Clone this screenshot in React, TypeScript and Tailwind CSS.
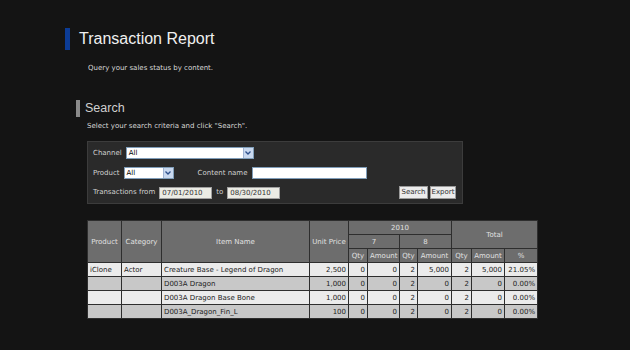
import React from "react";

const F = { fontFamily: '"DejaVu Sans", Verdana, sans-serif' };
const H = { fontFamily: '"Liberation Sans", Arial, sans-serif' };

function Arrow() {
  return (
    <span className="flex h-full w-[10px] items-center justify-center bg-[#c9d8ee] border-l border-[#9fb3d3]">
      <svg width="6" height="4" viewBox="0 0 6 4"><path d="M0.5 0.5 L3 3 L5.5 0.5" stroke="#2d4f8a" strokeWidth="1.3" fill="none" /></svg>
    </span>
  );
}

function Sel({ w }: { w: string }) {
  return (
    <div className={`flex h-[12px] ${w} items-stretch bg-white border border-[#7f9db9]`}>
      <span className="flex-1 pl-[2px] text-[7px] leading-[10px] text-black">All</span>
      <Arrow />
    </div>
  );
}

const rows = [
  ["iClone", "Actor", "Creature Base - Legend of Dragon", "2,500", "0", "0", "2", "5,000", "2", "5,000", "21.05%"],
  ["", "", "D003A Dragon", "1,000", "0", "0", "2", "0", "2", "0", "0.00%"],
  ["", "", "D003A Dragon Base Bone", "1,000", "0", "0", "2", "0", "2", "0", "0.00%"],
  ["", "", "D003A_Dragon_Fin_L", "100", "0", "0", "2", "0", "2", "0", "0.00%"],
];

const widths = [34, 40, 148, 39, 19, 32, 18, 34, 20, 33, 33];

export default function App() {
  const th = "border border-[#2e2e2e] bg-[#6d6d6d] text-[#e0e0e0] font-normal px-[2px]";
  return (
    <div className="h-[350px] w-[630px] bg-[#141414] overflow-hidden" style={F}>
      <div className="pt-[28px] pl-[65px] flex items-center">
        <div className="h-[22px] w-[5px] bg-[#0c3c96]" />
        <div className="ml-[9px] text-[16px] leading-[22px] text-[#f0f0f0]" style={H}>Transaction Report</div>
      </div>
      <div className="mt-[13px] pl-[88px] text-[7px] leading-[10px] text-[#d8d8d8]">Query your sales status by content.</div>

      <div className="mt-[27px] pl-[76px] flex items-center">
        <div className="h-[17px] w-[4px] bg-[#8a8a8a]" />
        <div className="ml-[5px] text-[12.5px] leading-[17px] text-[#d0d0d0]" style={H}>Search</div>
      </div>
      <div className="mt-[4px] pl-[87px] text-[7px] leading-[10px] text-[#d8d8d8]">Select your search criteria and click "Search".</div>

      <div className="ml-[87px] mt-[10px] w-[376px] h-[63px] bg-[#2a2a2a] border border-[#3c3c3c] px-[5px] pt-[5px] text-[7px] text-[#d0d0d0]">
        <div className="flex items-center h-[12px]">
          <span>Channel</span>
          <div className="ml-[4px]"><Sel w="w-[128px]" /></div>
        </div>
        <div className="flex items-center h-[12px] mt-[8px]">
          <span>Product</span>
          <div className="ml-[4px]"><Sel w="w-[50px]" /></div>
          <span className="ml-[24px]">Content name</span>
          <div className="ml-[4px] h-[12px] w-[115px] bg-white border border-[#7f9db9]" />
        </div>
        <div className="flex items-center h-[13px] mt-[7px]">
          <span>Transactions from</span>
          <div className="ml-[4px] h-[12px] w-[53px] bg-[#ebebe4] border border-[#a0a0a0] text-[#333] pl-[2px] leading-[10px]">07/01/2010</div>
          <span className="ml-[4px]">to</span>
          <div className="ml-[4px] h-[12px] w-[53px] bg-[#ebebe4] border border-[#a0a0a0] text-[#333] pl-[2px] leading-[10px]">08/30/2010</div>
          <div className="flex-1" />
          <div className="flex gap-[2px] mr-[1px]">
            <button className="h-[13px] w-[29px] bg-[#ececec] border border-[#9a9a9a] text-[#333] text-[7px] leading-[11px]" style={F}>Search</button>
            <button className="h-[13px] w-[26px] bg-[#ececec] border border-[#9a9a9a] text-[#333] text-[7px] leading-[11px]" style={F}>Export</button>
          </div>
        </div>
      </div>

      <div className="ml-[87px] mt-[16px]">
        <table className="border-collapse text-[7px] leading-[12px]" style={{ tableLayout: "fixed", width: 450 }}>
          <colgroup>
            {widths.map((w, i) => <col key={i} style={{ width: w }} />)}
          </colgroup>
          <thead>
            <tr className="h-[14px]">
              <th rowSpan={3} className={th}>Product</th>
              <th rowSpan={3} className={th}>Category</th>
              <th rowSpan={3} className={th}>Item Name</th>
              <th rowSpan={3} className={th}>Unit Price</th>
              <th colSpan={4} className={th}>2010</th>
              <th colSpan={3} rowSpan={2} className={th}>Total</th>
            </tr>
            <tr className="h-[14px]">
              <th colSpan={2} className={th}>7</th>
              <th colSpan={2} className={th}>8</th>
            </tr>
            <tr className="h-[14px]">
              <th className={th}>Qty</th>
              <th className={th}>Amount</th>
              <th className={th}>Qty</th>
              <th className={th}>Amount</th>
              <th className={th}>Qty</th>
              <th className={th}>Amount</th>
              <th className={th}>%</th>
            </tr>
          </thead>
          <tbody>
            {rows.map((r, i) => (
              <tr key={i} className={`h-[14px] ${i % 2 === 0 ? "bg-[#ebebeb]" : "bg-[#c8c8c8]"} text-[#222]`}>
                {r.map((c, j) => (
                  <td key={j} className={`border border-[#2e2e2e] px-[2px] whitespace-nowrap overflow-hidden ${j < 3 ? "text-left" : "text-right"}`}>{c}</td>
                ))}
              </tr>
            ))}
          </tbody>
        </table>
      </div>
    </div>
  );
}
